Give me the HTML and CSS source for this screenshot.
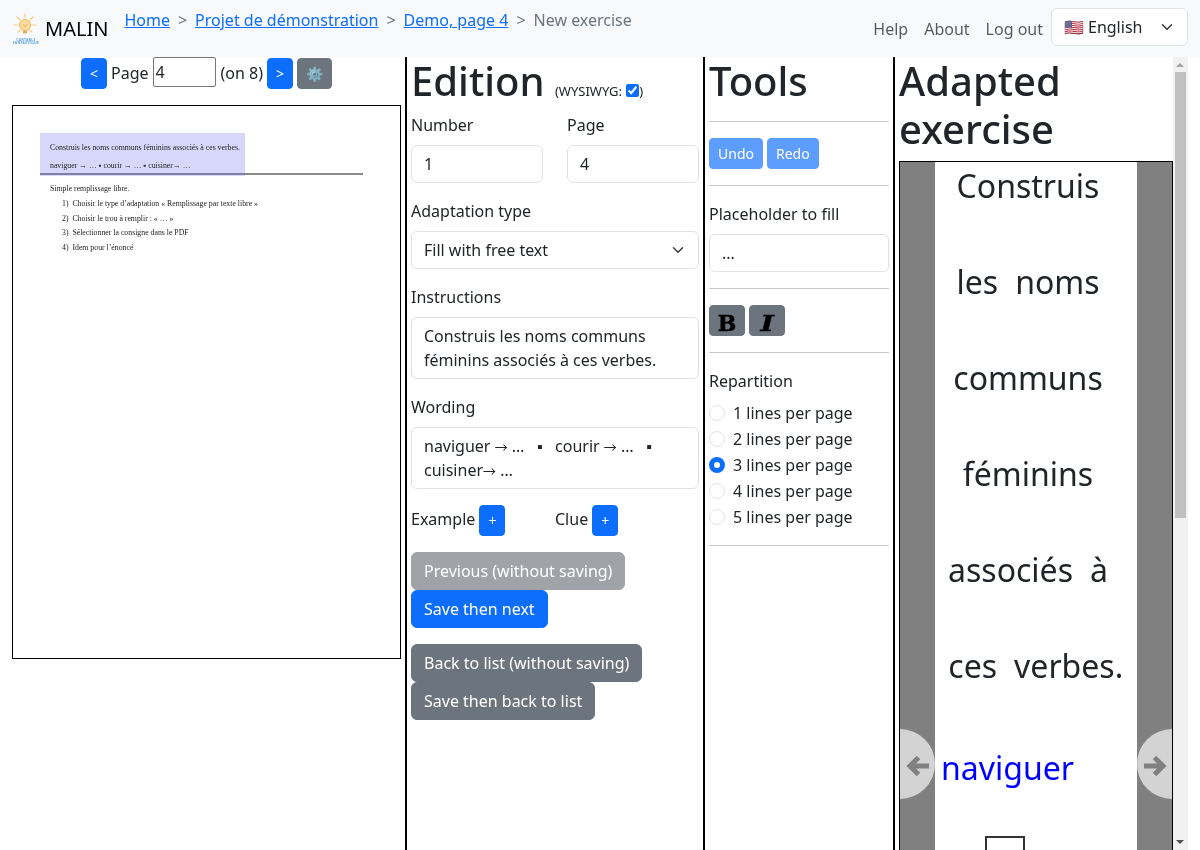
FILE: index.html
```html
<!DOCTYPE html>
<html lang="en">
<head>
<meta charset="utf-8">
<title>MALIN</title>
<link rel="stylesheet" href="styles.css">
</head>
<body>
<nav class="navbar">
  <a class="brand">
    <span class="logo">
      <svg class="logo-art" width="28" height="26" viewBox="1 1 28 26">
        <g stroke="#f9cb82" stroke-width="1.2" stroke-linecap="round">
          <path d="M14 2v3.500M6 5l3 3M22 5l-3 3M3 13h3.500M25 13h-3.500M7 20l2.500-2M21 20l-2.500-2"/>
        </g>
        <circle cx="14" cy="13" r="5.500" fill="#fcdca0" stroke="#f5b65a" stroke-width="1"/>
        <path d="M12 12l2 3 2-3" fill="none" stroke="#e8a33c" stroke-width=".7"/>
        <rect x="12" y="18.500" width="4" height="3" fill="#eab060"/>
      </svg>
      <span class="logo-text">CARTABLE<br>FANTASTIQUE</span>
    </span>
    <span class="brand-name">MALIN</span>
  </a>
  <ol class="crumbs">
    <li><a href="#">Home</a></li>
    <li class="sep">&gt;</li>
    <li><a href="#">Projet de démonstration</a></li>
    <li class="sep">&gt;</li>
    <li><a href="#">Demo, page 4</a></li>
    <li class="sep">&gt;</li>
    <li class="current">New exercise</li>
  </ol>
  <div class="nav-right">
    <a class="nav-link">Help</a>
    <a class="nav-link">About</a>
    <a class="nav-link">Log out</a>
    <div class="lang"><span class="flag">🇺🇸</span> English<svg class="chev" width="16" height="16" viewBox="0 0 16 16"><path d="M2 5l6 6 6-6" fill="none" stroke="#343a40" stroke-width="2" stroke-linecap="round" stroke-linejoin="round" transform="translate(2 2) scale(.75)"/></svg></div>
  </div>
</nav>
<main class="columns">
  <section class="col col-pdf">
    <div class="pager">
      <button class="btn btn-primary btn-sm">&lt;</button>
      <span>Page</span>
      <input class="page-input" value="4">
      <span>(on 8)</span>
      <button class="btn btn-primary btn-sm">&gt;</button>
      <button class="btn btn-secondary btn-sm btn-gear">⚙️</button>
    </div>
    <div class="pdf">
      <div class="pdf-rule"></div>
      <div class="pdf-hl"></div>
      <p class="pdf-l l1">Construis les noms communs féminins associés à ces verbes.</p>
      <p class="pdf-l l2">naviguer → … ▪ courir → … ▪ cuisiner→ …</p>
      <p class="pdf-l l3">Simple remplissage libre.</p>
      <p class="pdf-l l4">1)&nbsp; Choisir le type d’adaptation « Remplissage par texte libre »</p>
      <p class="pdf-l l5">2)&nbsp; Choisir le trou à remplir : « … »</p>
      <p class="pdf-l l6">3)&nbsp; Sélectionner la consigne dans le PDF</p>
      <p class="pdf-l l7">4)&nbsp; Idem pour l’énoncé</p>
    </div>
  </section>
  <section class="col col-edit">
    <h1 class="title">Edition <small class="wys">(WYSIWYG: <input type="checkbox" class="check" checked>)</small></h1>
    <div class="two">
      <div class="field"><label>Number</label><div class="control">1</div></div>
      <div class="field"><label>Page</label><div class="control">4</div></div>
    </div>
    <div class="field"><label>Adaptation type</label>
      <div class="control select">Fill with free text<svg class="chev" width="16" height="16" viewBox="0 0 16 16"><path d="M2 5l6 6 6-6" fill="none" stroke="#343a40" stroke-width="2" stroke-linecap="round" stroke-linejoin="round" transform="translate(2 2) scale(.75)"/></svg></div>
    </div>
    <div class="field"><label>Instructions</label><div class="control">Construis les noms communs féminins associés à ces verbes.</div></div>
    <div class="field"><label>Wording</label><div class="control">naviguer <span class="arrow">→</span> …&nbsp;&nbsp; ▪&nbsp;&nbsp; courir <span class="arrow">→</span> …&nbsp;&nbsp; ▪ cuisiner<span class="arrow">→</span> …</div></div>
    <div class="extras">
      <div class="extra">Example <button class="btn btn-primary btn-sm">+</button></div>
      <div class="extra">Clue <button class="btn btn-primary btn-sm">+</button></div>
    </div>
    <div class="actions">
      <button class="btn btn-disabled-gray">Previous (without saving)</button>
      <button class="btn btn-primary">Save then next</button>
    </div>
    <div class="actions">
      <button class="btn btn-secondary">Back to list (without saving)</button>
      <button class="btn btn-secondary">Save then back to list</button>
    </div>
  </section>
  <section class="col col-tools">
    <h1 class="title">Tools</h1>
    <hr class="rule">
    <div class="row-btns">
      <button class="btn btn-sm btn-faded">Undo</button>
      <button class="btn btn-sm btn-faded">Redo</button>
    </div>
    <hr class="rule">
    <div class="field"><label>Placeholder to fill</label><div class="control">...</div></div>
    <hr class="rule">
    <div class="row-btns">
      <button class="btn btn-secondary btn-fmt"><svg class="fmt-svg" width="24" height="22" viewBox="0 0 24 22"><text x="12" y="20.500" text-anchor="middle" class="fmt-b">B</text></svg></button>
      <button class="btn btn-secondary btn-fmt"><svg class="fmt-svg" width="24" height="22" viewBox="0 0 24 22"><text x="9.300" y="20.500" text-anchor="middle" transform="scale(1.3 1)" class="fmt-i">I</text></svg></button>
    </div>
    <hr class="rule">
    <div class="repart">
      <div class="repart-title">Repartition</div>
      <label class="radio"><span class="dot"></span>1 lines per page</label>
      <label class="radio"><span class="dot"></span>2 lines per page</label>
      <label class="radio"><span class="dot on"></span>3 lines per page</label>
      <label class="radio"><span class="dot"></span>4 lines per page</label>
      <label class="radio"><span class="dot"></span>5 lines per page</label>
    </div>
    <hr class="rule rule-last">
  </section>
  <section class="col col-adapted">
    <h1 class="title">Adapted exercise</h1>
    <div class="frame">
      <div class="page">
        <div class="line"><span>Construis</span></div>
        <div class="line"><span>les</span><span>noms</span></div>
        <div class="line"><span>communs</span></div>
        <div class="line"><span>féminins</span></div>
        <div class="line"><span>associés</span><span>à</span></div>
        <div class="line line-last"><span>ces</span><span>verbes<i class="stop">.</i></span></div>
        <div class="line line-left"><span class="blue">naviguer</span></div>
        <div class="line line-box"><span class="blank"></span></div>
      </div>
    </div>
  </section>
  <button class="turn turn-l" aria-label="Previous"><svg class="turn-svg" width="24" height="22" viewBox="0 0 24 22"><path d="M23 11H4M12.500 2.500L4 11l8.500 8.500" fill="none" stroke="#808080" stroke-width="5"/></svg></button>
  <button class="turn turn-r" aria-label="Next"><svg class="turn-svg" width="24" height="22" viewBox="0 0 24 22"><path d="M1 11h19M11.500 2.500L20 11l-8.500 8.500" fill="none" stroke="#808080" stroke-width="5"/></svg></button>
  <div class="scrollbar">
    <span class="sb-up"></span>
    <span class="sb-thumb"></span>
    <span class="sb-down"></span>
  </div>
</main>
</body>
</html>
```
FILE: styles.css
```css
* { box-sizing: border-box; }
html, body { margin: 0; height: 100%; overflow: hidden; }
body {
  font-family: system-ui, -apple-system, "Segoe UI", Roboto, "Helvetica Neue", "Noto Sans", "Liberation Sans", Arial, sans-serif;
  font-size: 16px;
  line-height: 24px;
  color: #212529;
  background: #fff;
}
a { color: #0d6efd; }

.navbar {
  height: 57px;
  background: #f8f9fa;
  display: flex;
  align-items: flex-start;
  padding: 0 12px;
  will-change: transform;
}
.brand { display: flex; align-items: center; color: #000; height: 57px; }
.logo { position: relative; width: 28px; height: 32px; display: block; }
.logo-art { display: block; }
.logo-text {
  position: absolute; left: 0; top: 25px; width: 28px; text-align: center;
  font-size: 3.400px; line-height: 3.500px; font-weight: 700; color: #5aa3e0; white-space: nowrap; letter-spacing: .3px;
}
.brand-name { font-size: 20px; margin-left: 5px; }
.crumbs {
  list-style: none; display: flex; margin: 8px 0 0 16px; padding: 0; color: #6c757d;
}
.crumbs .sep { margin: 0 8px; }
.crumbs a { color: #0d6efd; text-decoration: underline; }
.nav-right { margin-left: auto; display: flex; align-items: center; height: 57px; }
.nav-link { color: rgba(0,0,0,.65); margin-right: 16px; }
.nav-link:nth-child(3) { margin-right: 8px; }
.lang {
  width: 137px; height: 38px; background: #fff; border: 1px solid #dee2e6; border-radius: 6px;
  padding: 6px 12px; display: flex; align-items: center; position: relative; margin-bottom: 4px;
}
.flag { margin-right: 4px; font-size: 16px; }
.lang .chev { position: absolute; right: 12px; top: 10px; }

.columns { display: flex; height: 793px; position: relative; will-change: transform; }
.col { height: 793px; border-right: 2px solid #000; padding: 0 4px; flex: none; }
.col-pdf { width: 407px; padding: 0 4px 0 12px; }
.col-edit { width: 298px; }
.col-tools { width: 190px; }
.col-adapted { width: 293px; border-right: none; padding: 0 0 0 4px; }

.pager { display: flex; justify-content: center; align-items: center; height: 32px; margin: 0 0 16px; gap: 4px; }
.page-input {
  width: 63px; height: 30px; font: inherit; border: 1px solid #767676; border-radius: 2px;
  padding: 1px 2px; color: #212529; margin: 0 1px 2px 0;
}
.btn {
  display: inline-block; border: 1px solid transparent; border-radius: 6px; font: inherit;
  line-height: 24px; padding: 6px 12px; color: #fff; white-space: nowrap;
}
.btn-sm { font-size: 14px; line-height: 21px; padding: 4px 8px; border-radius: 4px; height: 31px; }
.btn-primary { background: #0d6efd; border-color: #0d6efd; }
.btn-secondary { background: #6c757d; border-color: #6c757d; }
.btn-disabled-gray { background: #a0a3a8; border-color: #a0a3a8; }
.btn-faded { background: #5c9dfd; border-color: #5c9dfd; }
.btn-gear { width: 35px; }
.btn-fmt { width: 36px; height: 31px; padding: 0; border-radius: 4px; display: flex; align-items: center; justify-content: center; }
.fmt-svg { overflow: visible; }
.fmt-b { font: 700 22px "DejaVu Serif", serif; fill: #000; stroke: #000; stroke-width: .5px; }
.fmt-i { font: italic 700 22px "DejaVu Serif", serif; fill: #000; stroke: #000; stroke-width: .4px; }
.arrow { line-height: 1; font-family: "Noto Sans CJK SC", sans-serif; font-size: 13px; }

.pdf {
  position: relative; width: 389px; height: 554px; border: 1px solid #000; overflow: hidden;
  font-family: "Liberation Serif", serif; color: #222; font-size: 7.800px; line-height: 12px;
}
.pdf-hl { position: absolute; left: 27px; top: 27px; width: 205px; height: 43px; background: rgba(100,100,240,.26); }
.pdf-rule { position: absolute; left: 27px; top: 67px; width: 323px; height: 2px; background: #8a8a8a; }
.pdf-l { position: absolute; margin: 0; white-space: nowrap; left: 37px; filter: blur(.25px); }
.l1 { top: 36px; }
.l2 { top: 54px; }
.l3 { top: 77px; }
.l4 { top: 92px; left: 49px; }
.l5 { top: 107px; left: 49px; }
.l6 { top: 121px; left: 49px; }
.l7 { top: 136px; left: 49px; }

.title { font-size: 40px; line-height: 48px; font-weight: 500; margin: 0 0 8px; }
.wys { font-size: 13px; font-weight: 400; line-height: 1; }
.check { width: 13px; height: 13px; margin: 0 0 0 1px; accent-color: #0d6efd; vertical-align: -1px; }
.two { display: flex; gap: 24px; }
.two .field { width: 132px; }
.field { margin-bottom: 16px; }
.field label { display: block; margin-bottom: 8px; }
.control {
  border: 1px solid #dee2e6; border-radius: 6px; padding: 6px 12px; background: #fff; min-height: 38px; position: relative;
}
.select .chev { position: absolute; right: 12px; top: 10px; }
.extras { display: flex; align-items: center; margin: 0 0 16px; }
.extras .btn { vertical-align: -1px; }
.extra { width: 144px; }
.actions { display: flex; flex-direction: column; align-items: flex-start; margin-bottom: 16px; }

.rule { border: 0; border-top: 1px solid #c8c8c8; margin: 16px 0; }
.rule-last { margin-top: 15px; }
.row-btns { display: flex; gap: 4px; }
.col-tools .field { margin-bottom: 0; }
.repart-title { margin-bottom: 7px; }
.radio { display: flex; align-items: center; height: 26px; }
.dot { width: 16px; height: 16px; border-radius: 50%; border: 1px solid #dee2e6; margin-right: 8px; background: #fff; flex: none; }
.dot.on { border: 5px solid #0d6efd; }

.frame {
  width: 274px; border: 1px solid #000; background: #808080; padding: 0 35px;
  height: 1180px;
}
.page { background: #fff; height: 100%; font-size: 32px; line-height: 48px; padding-right: 16px; }
.line { display: flex; justify-content: center; gap: 17px; height: 48px; margin-bottom: 48px; white-space: nowrap; }
.line-last { padding-left: 7px; }
.line-left { justify-content: flex-start; padding-left: 6px; margin-bottom: 44px; margin-top: 54px; }
.line-box { justify-content: flex-start; padding-left: 50px; }
.stop { font-style: normal; display: inline-block; width: 0; }
.blue { color: #0000ff; }
.blank { display: block; width: 40px; height: 48px; border: 2px solid #333; }

.turn {
  position: absolute; top: 672px; width: 35px; height: 70px; background: #d3d3d3; border: 0; padding: 0;
  display: flex; align-items: center; justify-content: center;
}
.turn-svg { margin-top: 3px; }
.turn-l { left: 900px; border-radius: 0 35px 35px 0; }
.turn-r { left: 1137px; border-radius: 35px 0 0 35px; }

.scrollbar { position: absolute; left: 1173px; top: 0; width: 15px; height: 793px; background: #f1f1f1; }
.sb-thumb { position: absolute; left: 2px; top: 15px; width: 11px; height: 446px; background: #c1c1c1; }
.sb-up, .sb-down { position: absolute; left: 3px; width: 0; height: 0; border-left: 4.500px solid transparent; border-right: 4.500px solid transparent; }
.sb-up { top: 6px; border-bottom: 4px solid #a3a3a3; }
.sb-down { bottom: 6px; border-top: 4px solid #505050; }
```
